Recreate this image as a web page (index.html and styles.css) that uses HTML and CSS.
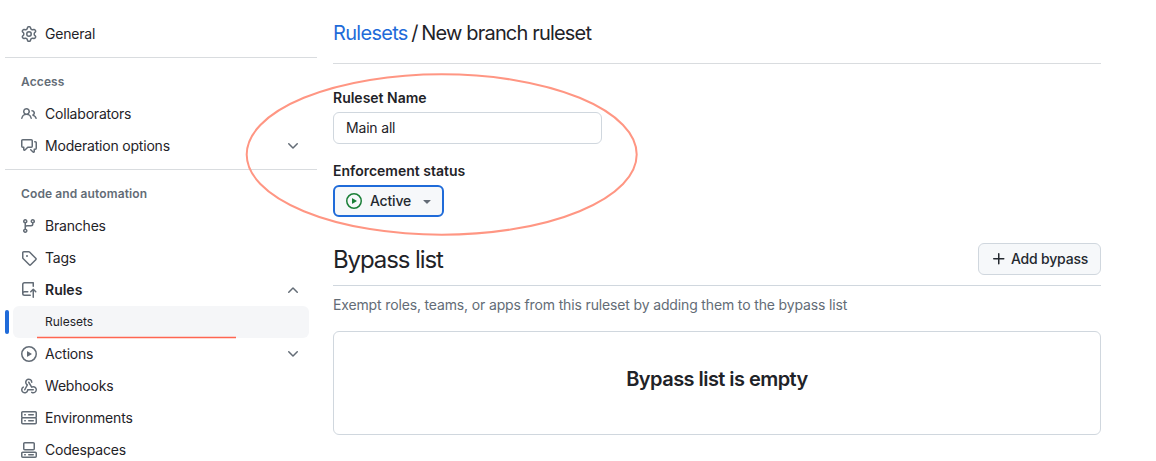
FILE: index.html
```html
<!DOCTYPE html>
<html lang="en">
<head>
<meta charset="utf-8">
<title>New branch ruleset</title>
<link rel="stylesheet" href="styles.css">
</head>
<body>
<div class="page">
  <nav class="sidebar">
    <a class="item"><svg class="icon" viewBox="0 0 16 16"><path d="M8 0a8.2 8.2 0 0 1 .701.031C9.444.095 9.99.645 10.16 1.29l.288 1.107c.018.066.079.158.212.224.231.114.454.243.668.386.123.082.233.09.299.071l1.103-.303c.644-.176 1.392.021 1.82.63.27.385.506.792.704 1.218.315.675.111 1.422-.364 1.891l-.814.806c-.049.048-.098.147-.088.294.016.257.016.515 0 .772-.01.147.038.246.088.294l.814.806c.475.469.679 1.216.364 1.891a7.977 7.977 0 0 1-.704 1.217c-.428.61-1.176.807-1.82.63l-1.102-.302c-.067-.019-.177-.011-.3.071a5.909 5.909 0 0 1-.668.386c-.133.066-.194.158-.211.224l-.29 1.106c-.168.646-.715 1.196-1.458 1.26a8.006 8.006 0 0 1-1.402 0c-.743-.064-1.289-.614-1.458-1.26l-.289-1.106c-.018-.066-.079-.158-.212-.224a5.738 5.738 0 0 1-.668-.386c-.123-.082-.233-.09-.299-.071l-1.103.303c-.644.176-1.392-.021-1.82-.63a8.12 8.12 0 0 1-.704-1.218c-.315-.675-.111-1.422.363-1.891l.815-.806c.05-.048.098-.147.088-.294a6.214 6.214 0 0 1 0-.772c.01-.147-.038-.246-.088-.294l-.815-.806C.635 6.045.431 5.298.746 4.623a7.92 7.92 0 0 1 .704-1.217c.428-.61 1.176-.807 1.82-.63l1.102.302c.067.019.177.011.3-.071.214-.143.437-.272.668-.386.133-.066.194-.158.211-.224l.29-1.106C6.009.645 6.556.095 7.299.03 7.53.01 7.764 0 8 0Zm-.571 1.525c-.036.003-.108.036-.137.146l-.289 1.105c-.147.561-.549.967-.998 1.189-.173.086-.34.183-.5.29-.417.278-.97.423-1.529.27l-1.103-.303c-.109-.03-.175.016-.195.045-.22.312-.412.644-.573.99-.014.031-.021.11.059.19l.815.806c.411.406.562.957.53 1.456a4.709 4.709 0 0 0 0 .582c.032.499-.119 1.05-.53 1.456l-.815.806c-.081.08-.073.159-.059.19.162.346.353.677.573.989.02.03.085.076.195.046l1.102-.303c.56-.153 1.113-.008 1.53.27.161.107.328.204.501.29.447.222.85.629.997 1.189l.289 1.105c.029.109.101.143.137.146a6.6 6.6 0 0 0 1.142 0c.036-.003.108-.036.137-.146l.289-1.105c.147-.561.549-.967.998-1.189.173-.086.34-.183.5-.29.417-.278.97-.423 1.529-.27l1.103.303c.109.029.175-.016.195-.045.22-.313.411-.644.573-.99.014-.031.021-.11-.059-.19l-.815-.806c-.411-.406-.562-.957-.53-1.456a4.709 4.709 0 0 0 0-.582c-.032-.499.119-1.05.53-1.456l.815-.806c.081-.08.073-.159.059-.19a6.464 6.464 0 0 0-.573-.989c-.02-.03-.085-.076-.195-.046l-1.102.303c-.56.153-1.113.008-1.53-.27a4.44 4.44 0 0 0-.501-.29c-.447-.222-.85-.629-.997-1.189l-.289-1.105c-.029-.11-.101-.143-.137-.146a6.6 6.6 0 0 0-1.142 0ZM11 8a3 3 0 1 1-6 0 3 3 0 0 1 6 0ZM9.5 8a1.5 1.5 0 1 0-3.001.001A1.5 1.5 0 0 0 9.5 8Z"/></svg><span class="label">General</span></a>
    <div class="divider"></div>
    <h2 class="group">Access</h2>
    <a class="item"><svg class="icon" viewBox="0 0 16 16"><path d="M2 5.5a3.5 3.5 0 1 1 5.898 2.549 5.508 5.508 0 0 1 3.034 4.084.75.75 0 1 1-1.482.235 4 4 0 0 0-7.9 0 .75.75 0 0 1-1.482-.236A5.507 5.507 0 0 1 3.102 8.05 3.493 3.493 0 0 1 2 5.5ZM11 4a3.001 3.001 0 0 1 2.22 5.018 5.01 5.01 0 0 1 2.56 3.012.749.749 0 0 1-.885.954.752.752 0 0 1-.549-.514 3.507 3.507 0 0 0-2.522-2.372.75.75 0 0 1-.574-.73v-.352a.75.75 0 0 1 .416-.672A1.5 1.5 0 0 0 11 5.5.75.75 0 0 1 11 4Zm-5.5-.5a2 2 0 1 0-.001 3.999A2 2 0 0 0 5.5 3.5Z"/></svg><span class="label">Collaborators</span></a>
    <a class="item"><svg class="icon" viewBox="0 0 16 16"><path d="M1.75 1h8.5c.966 0 1.75.784 1.75 1.75v5.5A1.75 1.75 0 0 1 10.25 10H7.061l-2.574 2.573A1.458 1.458 0 0 1 2 11.543V10h-.25A1.75 1.75 0 0 1 0 8.25v-5.5C0 1.784.784 1 1.75 1ZM1.5 2.75v5.5c0 .138.112.25.25.25h1a.75.75 0 0 1 .75.75v2.19l2.72-2.72a.749.749 0 0 1 .53-.22h3.5a.25.25 0 0 0 .25-.25v-5.5a.25.25 0 0 0-.25-.25h-8.5a.25.25 0 0 0-.25.25Zm13 2a.25.25 0 0 0-.25-.25h-.5a.75.75 0 0 1 0-1.5h.5c.966 0 1.75.784 1.75 1.75v5.5A1.75 1.75 0 0 1 14.25 12H14v1.543a1.458 1.458 0 0 1-2.487 1.03L9.22 12.28a.749.749 0 0 1 .326-1.275.749.749 0 0 1 .734.215l2.22 2.22v-2.19a.75.75 0 0 1 .75-.75h1a.25.25 0 0 0 .25-.25Z"/></svg><span class="label">Moderation options</span><svg class="icon" viewBox="0 0 16 16"><path d="M12.78 5.22a.749.749 0 0 1 0 1.06l-4.25 4.25a.749.749 0 0 1-1.06 0L3.22 6.28a.749.749 0 1 1 1.06-1.06L8 8.939l3.72-3.719a.749.749 0 0 1 1.06 0Z"/></svg></a>
    <div class="divider"></div>
    <h2 class="group">Code and automation</h2>
    <a class="item"><svg class="icon" viewBox="0 0 16 16"><path d="M9.5 3.25a2.25 2.25 0 1 1 3 2.122V6A2.5 2.5 0 0 1 10 8.5H6a1 1 0 0 0-1 1v1.128a2.251 2.251 0 1 1-1.5 0V5.372a2.25 2.25 0 1 1 1.5 0v1.836A2.493 2.493 0 0 1 6 7h4a1 1 0 0 0 1-1v-.628A2.25 2.25 0 0 1 9.5 3.25Zm-6 0a.75.75 0 1 0 1.5 0 .75.75 0 0 0-1.5 0Zm8.25-.75a.75.75 0 1 0 0 1.5.75.75 0 0 0 0-1.5ZM4.25 12a.75.75 0 1 0 0 1.5.75.75 0 0 0 0-1.5Z"/></svg><span class="label">Branches</span></a>
    <a class="item"><svg class="icon" viewBox="0 0 16 16"><path d="M1 7.775V2.75C1 1.784 1.784 1 2.75 1h5.025c.464 0 .91.184 1.238.513l6.25 6.25a1.75 1.75 0 0 1 0 2.474l-5.026 5.026a1.75 1.75 0 0 1-2.474 0l-6.25-6.25A1.752 1.752 0 0 1 1 7.775Zm1.5 0c0 .066.026.13.073.177l6.25 6.25a.25.25 0 0 0 .354 0l5.025-5.025a.25.25 0 0 0 0-.354l-6.25-6.25a.25.25 0 0 0-.177-.073H2.75a.25.25 0 0 0-.25.25ZM6 5a1 1 0 1 1 0 2 1 1 0 0 1 0-2Z"/></svg><span class="label">Tags</span></a>
    <a class="item open"><svg class="icon" viewBox="0 0 16 16"><path d="M1 2.5A2.5 2.5 0 0 1 3.5 0h8.75a.75.75 0 0 1 .75.75v3.5a.75.75 0 0 1-1.5 0V1.5h-8a1 1 0 0 0-1 1v6.708A2.493 2.493 0 0 1 3.5 9h3.25a.75.75 0 0 1 0 1.5H3.5a1 1 0 0 0 0 2h5.75a.75.75 0 0 1 0 1.5H3.5A2.5 2.5 0 0 1 1 11.5Zm13.23 7.79a.75.75 0 0 0 1.06-1.06l-2.505-2.505a.75.75 0 0 0-1.06 0L9.22 9.229a.75.75 0 0 0 1.06 1.061l1.225-1.224v6.184a.75.75 0 0 0 1.5 0V9.066Z"/></svg><span class="label">Rules</span><svg class="icon flip" viewBox="0 0 16 16"><path d="M12.78 5.22a.749.749 0 0 1 0 1.06l-4.25 4.25a.749.749 0 0 1-1.06 0L3.22 6.28a.749.749 0 1 1 1.06-1.06L8 8.939l3.72-3.719a.749.749 0 0 1 1.06 0Z"/></svg></a>
    <div class="current"><span class="marker"></span><a class="subitem">Rulesets</a></div>
    <a class="item"><svg class="icon" viewBox="0 0 16 16"><path d="M8 0a8 8 0 1 1 0 16A8 8 0 0 1 8 0ZM1.5 8a6.5 6.5 0 1 0 13 0 6.5 6.5 0 0 0-13 0Zm4.879-2.773 4.264 2.559a.25.25 0 0 1 0 .428l-4.264 2.559A.25.25 0 0 1 6 10.559V5.442a.25.25 0 0 1 .379-.215Z"/></svg><span class="label">Actions</span><svg class="icon" viewBox="0 0 16 16"><path d="M12.78 5.22a.749.749 0 0 1 0 1.06l-4.25 4.25a.749.749 0 0 1-1.06 0L3.22 6.28a.749.749 0 1 1 1.06-1.06L8 8.939l3.72-3.719a.749.749 0 0 1 1.06 0Z"/></svg></a>
    <a class="item"><svg class="icon" viewBox="0 0 16 16"><path d="M5.5 4.25a2.25 2.25 0 0 1 4.5 0 .75.75 0 0 0 1.5 0 3.75 3.75 0 1 0-6.14 2.889l-2.272 4.258a.75.75 0 0 0 1.324.706L7 7.25a.75.75 0 0 0-.309-1.015A2.25 2.25 0 0 1 5.5 4.25Z"/><path d="M7.364 3.607a.75.75 0 0 1 1.03.257l2.608 4.349a3.75 3.75 0 1 1-.628 6.785.75.75 0 0 1 .752-1.299 2.25 2.25 0 1 0-.033-3.88.75.75 0 0 1-1.03-.256L7.107 4.636a.75.75 0 0 1 .257-1.03Z"/><path d="M2.9 8.776A.75.75 0 0 1 2.625 9.8 2.25 2.25 0 1 0 6 11.75a.75.75 0 0 1 .75-.751h5.5a.75.75 0 0 1 0 1.5H7.425a3.751 3.751 0 1 1-5.55-3.998.75.75 0 0 1 1.024.274Z"/></svg><span class="label">Webhooks</span></a>
    <a class="item"><svg class="icon" viewBox="0 0 16 16"><path d="M1.75 1h12.5c.966 0 1.75.784 1.75 1.75v4c0 .372-.116.717-.314 1 .198.283.314.628.314 1v4a1.75 1.75 0 0 1-1.75 1.75H1.75A1.75 1.75 0 0 1 0 12.75v-4c0-.358.109-.707.314-1a1.739 1.739 0 0 1-.314-1v-4C0 1.784.784 1 1.75 1ZM1.5 2.75v4c0 .138.112.25.25.25h12.5a.25.25 0 0 0 .25-.25v-4a.25.25 0 0 0-.25-.25H1.75a.25.25 0 0 0-.25.25Zm.25 5.75a.25.25 0 0 0-.25.25v4c0 .138.112.25.25.25h12.5a.25.25 0 0 0 .25-.25v-4a.25.25 0 0 0-.25-.25ZM7 4.75A.75.75 0 0 1 7.75 4h4.5a.75.75 0 0 1 0 1.5h-4.5A.75.75 0 0 1 7 4.75ZM7.75 10h4.5a.75.75 0 0 1 0 1.5h-4.5a.75.75 0 0 1 0-1.5ZM3 4.75A.75.75 0 0 1 3.75 4h.5a.75.75 0 0 1 0 1.5h-.5A.75.75 0 0 1 3 4.75ZM3.75 10h.5a.75.75 0 0 1 0 1.5h-.5a.75.75 0 0 1 0-1.5Z"/></svg><span class="label">Environments</span></a>
    <a class="item"><svg class="icon" viewBox="0 0 16 16"><path d="M0 11.25c0-.966.784-1.75 1.75-1.75h12.5c.966 0 1.75.784 1.75 1.75v3A1.75 1.75 0 0 1 14.25 16H1.75A1.75 1.75 0 0 1 0 14.25Zm2-9.5C2 .784 2.784 0 3.75 0h8.5C13.216 0 14 .784 14 1.75v5a1.75 1.75 0 0 1-1.75 1.75h-8.5A1.75 1.75 0 0 1 2 6.75Zm1.75-.25a.25.25 0 0 0-.25.25v5c0 .138.112.25.25.25h8.5a.25.25 0 0 0 .25-.25v-5a.25.25 0 0 0-.25-.25Zm-2 9.5a.25.25 0 0 0-.25.25v3c0 .138.112.25.25.25h12.5a.25.25 0 0 0 .25-.25v-3a.25.25 0 0 0-.25-.25Z"/><path d="M7 12.75a.75.75 0 0 1 .75-.75h4.5a.75.75 0 0 1 0 1.5h-4.5a.75.75 0 0 1-.75-.75Zm-4 0a.75.75 0 0 1 .75-.75h.5a.75.75 0 0 1 0 1.5h-.5a.75.75 0 0 1-.75-.75Z"/></svg><span class="label">Codespaces</span></a>
  </nav>
  <main class="content">
    <h1 class="title"><a class="link">Rulesets</a><span class="slash">/</span><span class="name">New branch ruleset</span></h1>
    <label class="field-label" for="name">Ruleset Name</label>
    <input class="input" id="name" type="text" value="Main all">
    <div class="field-label status-label">Enforcement status</div>
    <button class="select"><svg class="icon play" viewBox="0 0 16 16"><path d="M8 0a8 8 0 1 1 0 16A8 8 0 0 1 8 0ZM1.5 8a6.5 6.5 0 1 0 13 0 6.5 6.5 0 0 0-13 0Zm4.879-2.773 4.264 2.559a.25.25 0 0 1 0 .428l-4.264 2.559A.25.25 0 0 1 6 10.559V5.442a.25.25 0 0 1 .379-.215Z"/></svg><span>Active</span><svg class="icon" viewBox="0 0 16 16"><path d="m4.427 7.427 3.396 3.396a.25.25 0 0 0 .354 0l3.396-3.396A.25.25 0 0 0 11.396 7H4.604a.25.25 0 0 0-.177.427Z"/></svg></button>
    <div class="section-head">
      <h2 class="section-title">Bypass list</h2>
      <button class="button"><svg class="icon" viewBox="0 0 16 16"><path d="M7.75 2a.75.75 0 0 1 .75.75V7h4.25a.75.75 0 0 1 0 1.5H8.5v4.25a.75.75 0 0 1-1.5 0V8.5H2.75a.75.75 0 0 1 0-1.5H7V2.75A.75.75 0 0 1 7.75 2Z"/></svg><span>Add bypass</span></button>
    </div>
    <p class="hint">Exempt roles, teams, or apps from this ruleset by adding them to the bypass list</p>
    <div class="blank"><h3 class="blank-title">Bypass list is empty</h3></div>
  </main>
  <svg class="annotations" viewBox="0 0 1156 461">
    <ellipse class="ring" cx="441.7" cy="154.5" rx="195" ry="80.2"/>
    <line class="underline" x1="37" y1="337.5" x2="236" y2="337.5"/>
  </svg>
</div>
</body>
</html>
```
FILE: styles.css
```css
* { box-sizing: border-box; }
body {
  margin: 0;
  background: #fff;
  color: #1f2328;
  font: 14px/20px Inter, "Liberation Sans", sans-serif;
}
h1, h2, h3, p { margin: 0; }
.page {
  position: relative;
  display: flex;
  gap: 16px;
  height: 461px;
  padding: 18px 55px 0 5px;
  overflow: hidden;
}
.sidebar { width: 312px; flex: none; }
.item {
  display: flex;
  align-items: center;
  gap: 8px;
  height: 32px;
  padding: 0 16px;
}
.label { flex: 1; letter-spacing: -0.2px; }
.open .label { font-weight: 600; letter-spacing: 0; }
.icon { width: 16px; height: 16px; flex: none; fill: #636c76; }
.flip { transform: scaleY(-1); }
.divider { height: 1px; margin: 7px 0 8px; background: #d9dcdf; }
.group {
  padding: 7px 16px;
  font-size: 12px;
  line-height: 18px;
  font-weight: 600;
  letter-spacing: 0.12px;
  color: #636c76;
}
.current { display: flex; align-items: center; gap: 4px; height: 32px; }
.marker { width: 4px; height: 24px; border-radius: 3px; background: #1f6bd9; }
.subitem {
  width: 296px;
  height: 32px;
  padding-left: 32px;
  border-radius: 6px;
  background: #f5f6f8;
  font-size: 12px;
  line-height: 32px;
}
.content { flex: 1; }
.title {
  display: flex;
  gap: 3.5px;
  height: 46px;
  border-bottom: 1px solid #d9dcdf;
  font-size: 20px;
  line-height: 30px;
  font-weight: 400;
  letter-spacing: -0.7px;
}
.name { letter-spacing: -0.82px; }
.link { color: #1f6bd9; }
.field-label { display: block; margin: 24px 0 4px; font-weight: 600; }
.input {
  display: block;
  width: 269px;
  height: 32px;
  padding: 0 12px 2px;
  border: 1px solid #d0d7de;
  border-radius: 6px;
  color: #1f2328;
  font: inherit;
  letter-spacing: -0.18px;
}
.status-label { margin-top: 17px; }
.select, .button {
  display: flex;
  align-items: center;
  gap: 8px;
  height: 32px;
  background: #f6f8fa;
  border-radius: 6px;
  color: #24292f;
  font: 500 14px/20px Inter, "Liberation Sans", sans-serif;
  letter-spacing: -0.2px;
}
.select { width: 111px; padding: 0 10px 0 11px; border: 2px solid #1f6bd9; }
.play { fill: #1a7f37; }
.section-head {
  display: flex;
  justify-content: space-between;
  height: 69px;
  padding-top: 26px;
  border-bottom: 1px solid #d0d7de;
}
.section-title { font-size: 24px; line-height: 34px; font-weight: 400; letter-spacing: -1.1px; }
.button { gap: 4px; width: 123px; padding: 0 12px; border: 1px solid #d0d7de; white-space: nowrap; }
.button .icon { fill: #24292f; }
.hint { margin: 9px 0 16px; color: #636c76; letter-spacing: -0.145px; white-space: nowrap; }
.blank {
  height: 104px;
  padding-top: 32px;
  border: 1px solid #d0d7de;
  border-radius: 6px;
  text-align: center;
}
.blank-title { font-size: 20px; line-height: 30px; font-weight: 600; letter-spacing: -0.55px; }
.annotations {
  position: absolute;
  inset: 0;
  width: 1156px;
  height: 461px;
  fill: none;
  pointer-events: none;
}
.ring { stroke: #ff9683; stroke-width: 2; }
.underline { stroke: #ff6651; stroke-width: 1.5; }
```
